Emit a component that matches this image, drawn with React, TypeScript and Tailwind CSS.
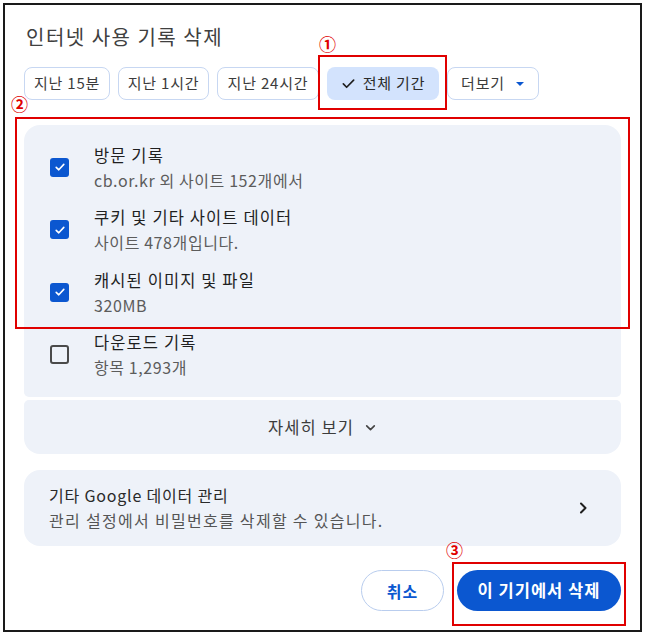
import React from "react";

const FONT = { fontFamily: '"Noto Sans CJK KR", "Noto Sans", sans-serif' };

function CheckBox({ checked }: { checked: boolean }) {
  if (checked) {
    return (
      <div className="w-[19px] h-[19px] rounded-[3px] bg-[#0b57d0] flex items-center justify-center shrink-0">
        <svg width="12" height="12" viewBox="0 0 12 12" fill="none">
          <path d="M2.2 6.3 L4.8 8.8 L9.8 3.4" stroke="white" strokeWidth="1.6" strokeLinecap="round" strokeLinejoin="round" />
        </svg>
      </div>
    );
  }
  return <div className="w-[19px] h-[19px] rounded-[3px] border-2 border-[#4a4a4a] shrink-0" />;
}

function Item({ checked, title, sub }: { checked: boolean; title: string; sub: string }) {
  return (
    <div className="h-[62.5px] flex items-center pl-[26px]">
      <CheckBox checked={checked} />
      <div className="ml-[25px] flex flex-col">
        <div className="text-[16.5px] leading-[25px] tracking-[1.1px] text-[#1f1f1f]">{title}</div>
        <div className="text-[16px] leading-[24px] tracking-[0.6px] text-[#5c5c5c]">{sub}</div>
      </div>
    </div>
  );
}

export default function App() {
  return (
    <div className="w-[645px] h-[635px] bg-white p-[3px]" style={FONT}>
      <div className="relative h-full border-2 border-[#1a1a1a] flex flex-col px-[19px]">
        <div className="mt-[18px] ml-[2px] text-[20px] leading-[28px] tracking-[1.5px] text-[#404040]">인터넷 사용 기록 삭제</div>

        <div className="mt-[16px] flex gap-[8px] h-[33px] text-[15px] tracking-[0.8px] text-[#3c3c3c]">
          <div className="w-[86px] rounded-[8px] border border-[#c7d7f2] flex items-center justify-center">지난 15분</div>
          <div className="w-[91px] rounded-[8px] border border-[#c7d7f2] flex items-center justify-center">지난 1시간</div>
          <div className="w-[102px] rounded-[8px] border border-[#c7d7f2] flex items-center justify-center">지난 24시간</div>
          <div className="w-[112px] rounded-[8px] bg-[#d3e3fd] flex items-center justify-center gap-[7px] text-[#2b2b2b]">
            <svg width="15" height="15" viewBox="0 0 16 16" fill="none">
              <path d="M2.5 8.5 L6 12 L13.5 4.5" stroke="#1f1f1f" strokeWidth="1.8" strokeLinecap="round" strokeLinejoin="round" />
            </svg>
            <span>전체 기간</span>
          </div>
          <div className="w-[92px] rounded-[8px] border border-[#c7d7f2] flex items-center justify-center gap-[10px]">
            <span>더보기</span>
            <svg width="10" height="6" viewBox="0 0 10 6">
              <path d="M1 1 L5 5 L9 1 Z" fill="#0b57d0" />
            </svg>
          </div>
        </div>

        <div className="mt-[25px] bg-[#eef2f9] rounded-t-[16px] rounded-b-[5px] py-[11px]">
          <Item checked title="방문 기록" sub="cb.or.kr 외 사이트 152개에서" />
          <Item checked title="쿠키 및 기타 사이트 데이터" sub="사이트 478개입니다." />
          <Item checked title="캐시된 이미지 및 파일" sub="320MB" />
          <Item checked={false} title="다운로드 기록" sub="항목 1,293개" />
        </div>

        <div className="mt-[3px] h-[54px] bg-[#eef2f9] rounded-t-[5px] rounded-b-[16px] flex items-center justify-center gap-[10px] text-[16.5px] tracking-[1.1px] text-[#3c3c3c]">
          <span>자세히 보기</span>
          <svg width="13" height="13" viewBox="0 0 12 12" fill="none">
            <path d="M2.5 4.5 L6 8 L9.5 4.5" stroke="#444" strokeWidth="1.5" strokeLinecap="round" strokeLinejoin="round" />
          </svg>
        </div>

        <div className="mt-[16px] h-[76px] bg-[#eef2f9] rounded-[16px] flex items-center pl-[25px] pr-[32px]">
          <div className="flex-1 flex flex-col">
            <div className="text-[16px] leading-[25px] tracking-[0.8px] text-[#2a2a2a]">기타 Google 데이터 관리</div>
            <div className="text-[16px] leading-[25px] tracking-[1.3px] text-[#555]">관리 설정에서 비밀번호를 삭제할 수 있습니다.</div>
          </div>
          <svg width="12" height="14" viewBox="0 0 12 14" fill="none">
            <path d="M4 2.5 L8.5 7 L4 11.5" stroke="#1f1f1f" strokeWidth="2" strokeLinecap="round" strokeLinejoin="round" />
          </svg>
        </div>

        <div className="mt-[24px] flex justify-end gap-[13px]">
          <div className="w-[83px] h-[41px] rounded-full border border-[#b9cdee] flex items-center justify-center text-[16px] tracking-[1px] font-bold text-[#0b57d0]">
            취소
          </div>
          <div className="w-[164px] h-[41px] rounded-full bg-[#0b57d0] flex items-center justify-center text-[16.5px] tracking-[1px] font-bold text-white">
            이 기기에서 삭제
          </div>
        </div>

        {/* annotations */}
        <div className="absolute left-[313px] top-[50px] w-[129px] h-[55px] border-2 border-[#e00000]" />
        <div className="absolute left-[314px] top-[29px] text-[17px] leading-[20px] font-bold text-[#e00000]">①</div>
        <div className="absolute left-[10px] top-[112px] w-[615px] h-[212px] border-2 border-[#e00000]" />
        <div className="absolute left-[6px] top-[89px] text-[17px] leading-[20px] font-bold text-[#e00000]">②</div>
        <div className="absolute left-[447px] top-[557px] w-[174px] h-[64px] border-2 border-[#e00000]" />
        <div className="absolute left-[441px] top-[535px] text-[17px] leading-[20px] font-bold text-[#e00000]">③</div>
      </div>
    </div>
  );
}
